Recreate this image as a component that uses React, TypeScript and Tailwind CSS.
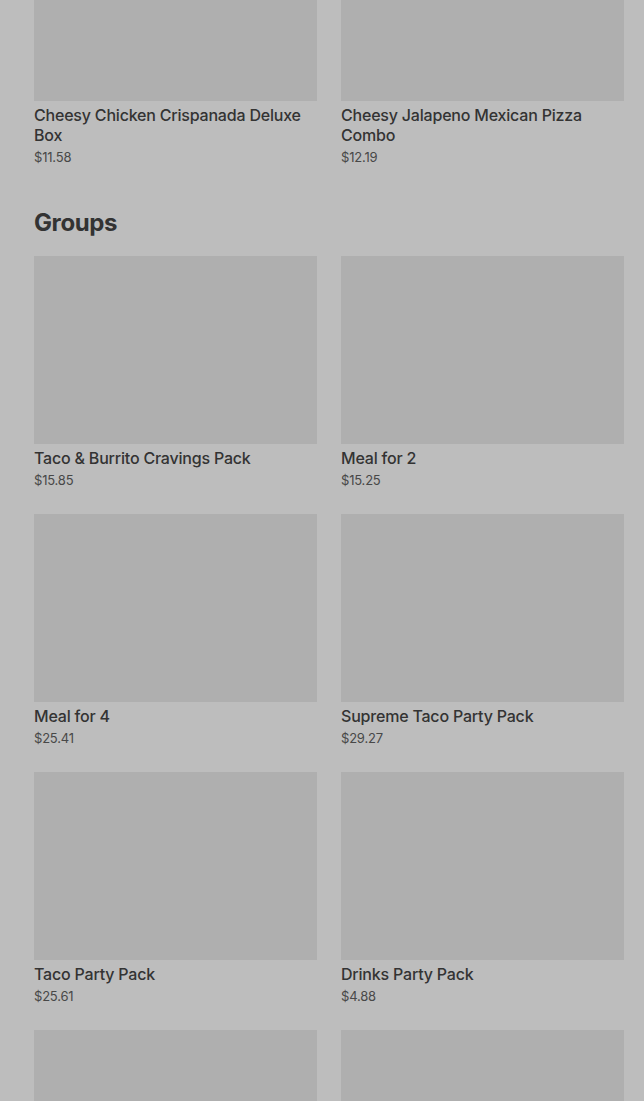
type Item = { name: string; price: string };

const topRow: Item[] = [
  { name: "Cheesy Chicken Crispanada Deluxe Box", price: "$11.58" },
  { name: "Cheesy Jalapeno Mexican Pizza Combo", price: "$12.19" },
];

const groups: Item[] = [
  { name: "Taco & Burrito Cravings Pack", price: "$15.85" },
  { name: "Meal for 2", price: "$15.25" },
  { name: "Meal for 4", price: "$25.41" },
  { name: "Supreme Taco Party Pack", price: "$29.27" },
  { name: "Taco Party Pack", price: "$25.61" },
  { name: "Drinks Party Pack", price: "$4.88" },
];

function MenuCard({ item }: { item: Item }) {
  return (
    <div className="flex flex-col">
      <div className="h-[188px] w-full bg-[#afafaf]" />
      <div className="mt-[4px] text-[16px] font-medium leading-5 tracking-[-0.2px] text-[#333333]">
        {item.name}
      </div>
      <div className="mt-[4px] text-[13px] leading-4 tracking-[-0.2px] text-[#484848]">
        {item.price}
      </div>
    </div>
  );
}

export default function App() {
  return (
    <div
      className="h-[1101px] overflow-hidden bg-[#bdbdbd] pl-[34px] pr-[20px]"
      style={{ fontFamily: "Inter, 'Noto Sans', Arial, sans-serif" }}
    >
      <div className="-mt-[87px] grid grid-cols-2 gap-x-6">
        {topRow.map((item) => (
          <MenuCard key={item.name} item={item} />
        ))}
      </div>

      <h2 className="mt-[42px] text-[24px] font-bold leading-8 tracking-[-0.4px] text-[#333333]">
        Groups
      </h2>

      <div className="mt-[17px] grid grid-cols-2 gap-x-6 gap-y-[26px]">
        {groups.map((item) => (
          <MenuCard key={item.name} item={item} />
        ))}
        <div className="h-[188px] w-full bg-[#afafaf]" />
        <div className="h-[188px] w-full bg-[#afafaf]" />
      </div>
    </div>
  );
}
